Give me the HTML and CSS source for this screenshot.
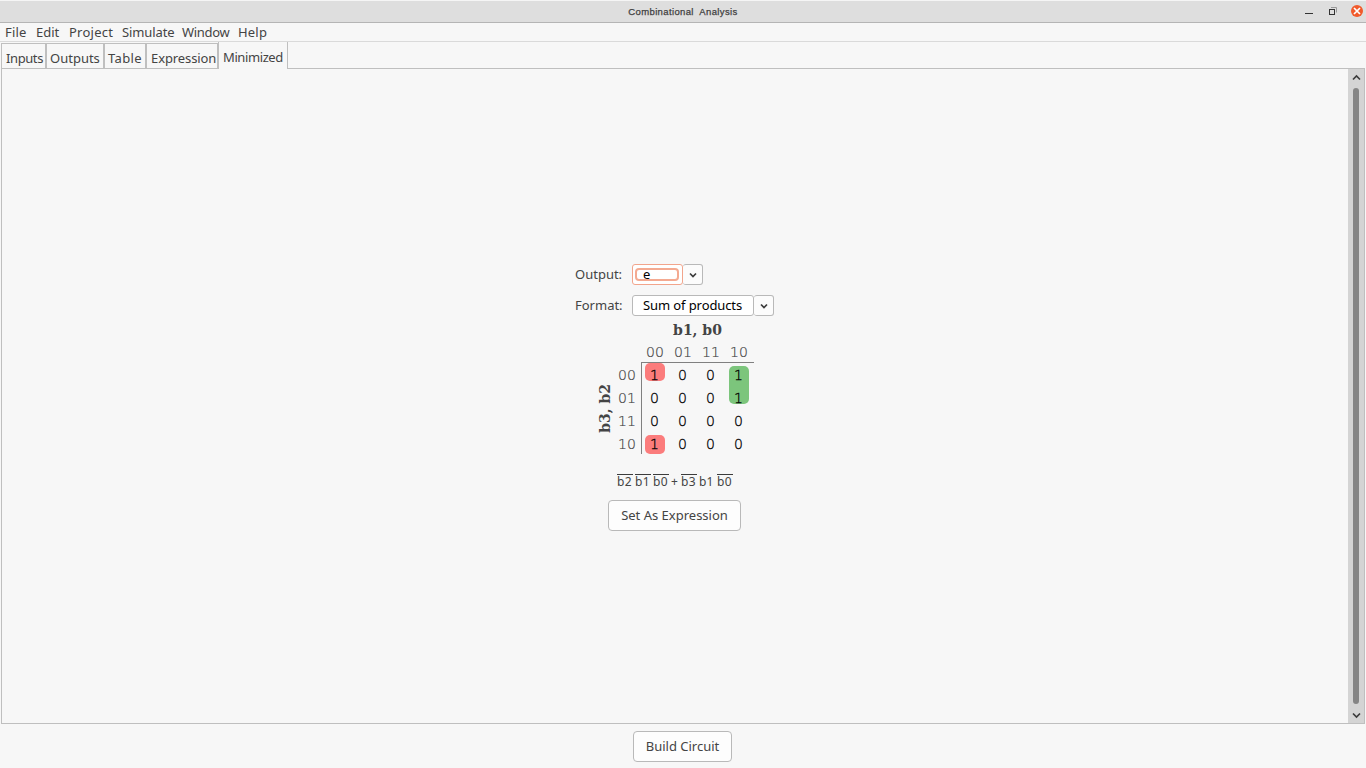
FILE: index.html
```html
<!DOCTYPE html>
<html lang="en">
<head>
<meta charset="utf-8">
<title>Combinational Analysis</title>
<link rel="stylesheet" href="styles.css">
</head>
<body>
<header class="titlebar">
  <h1 class="title">Combinational&nbsp; Analysis</h1>
  <div class="controls">
    <svg width="62" height="18" viewBox="0 0 62 18">
      <path d="M1 12.500h8" stroke="#333"/>
      <path d="M27 6.500h5.500v5" stroke="#999"/>
      <rect x="25.500" y="8.500" width="5" height="5" stroke="#333" fill="none"/>
      <circle cx="53" cy="10" r="6" fill="#f15a2b"/>
      <path d="M50 7l6 6M56 7l-6 6" stroke="#fff" stroke-width="1.700"/>
    </svg>
  </div>
</header>
<nav class="menubar">
  <span class="m-file">File</span><span class="m-edit">Edit</span><span class="m-project">Project</span><span class="m-simulate">Simulate</span><span class="m-window">Window</span><span class="m-help">Help</span>
</nav>
<div class="tabs">
  <div class="tab t-inputs"><span>Inputs</span></div>
  <div class="tab t-outputs"><span>Outputs</span></div>
  <div class="tab t-table"><span>Table</span></div>
  <div class="tab t-expression"><span>Expression</span></div>
  <div class="tab active"><span>Minimized</span></div>
  <div class="tab-fill"></div>
</div>
<main class="panel">
  <section class="content">
    <div class="field">
      <label>Output:</label>
      <div class="combo focused"><span class="value"><span class="inner">e</span></span><span class="arrow"><svg width="9" height="6" viewBox="0 0 9 6"><path d="M1 1.500l3 3 3-3" /></svg></span></div>
    </div>
    <div class="field">
      <label>Format:</label>
      <div class="combo wide"><span class="value">Sum of products</span><span class="arrow"><svg width="9" height="6" viewBox="0 0 9 6"><path d="M1 1.500l3 3 3-3" /></svg></span></div>
    </div>
    <div class="kmap">
      <div class="top-vars">b1, b0</div>
      <div class="cols"><span>00</span><span>01</span><span>11</span><span>10</span></div>
      <div class="side-vars"><span>b3, b2</span></div>
      <div class="rows"><span>00</span><span>01</span><span>11</span><span>10</span></div>
      <div class="cells">
        <i class="group red-top"></i><i class="group red-bottom"></i><i class="group green"></i>
        <span>1</span><span>0</span><span>0</span><span>1</span>
        <span>0</span><span>0</span><span>0</span><span>1</span>
        <span>0</span><span>0</span><span>0</span><span>0</span>
        <span>1</span><span>0</span><span>0</span><span>0</span>
      </div>
    </div>
    <div class="formula"><span class="not">b2</span><span class="not">b1</span><span class="not">b0</span><span class="plus">+</span><span class="not">b3</span><span class="var">b1</span><span class="not">b0</span></div>
    <button class="button set"><span>Set As Expression</span></button>
  </section>
  <aside class="scrollbar">
    <svg width="11" height="8" viewBox="0 0 11 8"><path d="M2 6.500l3.500-3.500L9 6.500"/></svg>
    <div class="thumb"></div>
    <svg width="11" height="8" viewBox="0 0 11 8"><path d="M2 2.500l3.500 3.500L9 2.500"/></svg>
  </aside>
</main>
<footer class="footer"><button class="button build"><span>Build Circuit</span></button></footer>
</body>
</html>
```
FILE: styles.css
```css
* { box-sizing: border-box; }
body {
  margin: 0;
  width: 1366px;
  height: 768px;
  overflow: hidden;
  display: flex;
  flex-direction: column;
  background: #f7f7f7;
  color: #444;
  font: 13px/18px "Noto Sans", sans-serif;
  white-space: nowrap;
}
.titlebar {
  height: 23px;
  display: grid;
  grid-template-columns: 62px 1fr 62px;
  background: #dedede;
  border-top: 1px solid #f5f5f5;
  border-bottom: 1px solid #b5b5b5;
}
.title {
  grid-column: 2;
  margin: 0;
  text-align: center;
  font: 9.5px/21px "Liberation Sans", sans-serif;
  letter-spacing: 0.37px;
  -webkit-text-stroke: 0.25px #3c3c3c;
}
.controls svg { display: block; }
.menubar {
  height: 19px;
  display: flex;
  padding-left: 5px;
  border-bottom: 1px solid #dadada;
  line-height: 19px;
}
.m-file { width: 31px; letter-spacing: 0.2px; }
.m-edit { width: 33px; }
.m-project { width: 53px; letter-spacing: 0.25px; }
.m-simulate { width: 60px; letter-spacing: -0.1px; }
.m-window { width: 56px; letter-spacing: -0.3px; }
.m-help { letter-spacing: 0.2px; }
.tabs {
  height: 27px;
  display: flex;
  padding-left: 1px;
}
.tab {
  margin-top: 1px;
  border: 1px solid #bfbfbf;
  padding: 5px 0 0 3px;
}
.t-inputs { width: 45px; padding-left: 4px; letter-spacing: -0.4px; }
.t-outputs { width: 58px; }
.t-table { width: 42px; letter-spacing: 0.35px; }
.t-expression { width: 72px; padding-left: 4px; letter-spacing: -0.1px; }
.active {
  width: 70px;
  margin-top: 0;
  padding-top: 6px;
  padding-left: 4px;
  border-top: 0;
  border-bottom: 0;
  letter-spacing: -0.4px;
}
.tab-fill { flex: 1; margin-right: 1px; border-bottom: 1px solid #bfbfbf; }
.panel {
  height: 655px;
  margin: 0 1px;
  display: flex;
  border: 1px solid #bfbfbf;
  border-top: 0;
}
.content {
  flex: 1;
  padding: 195px 0 0 573px;
  display: flex;
  flex-direction: column;
  align-items: flex-start;
}
.field { height: 31px; display: flex; }
.field label { width: 57px; line-height: 21px; }
.combo { height: 21px; display: flex; color: #000; line-height: 19px; }
.value {
  width: 51px;
  border: 1px solid #b9b9b9;
  border-radius: 3px;
  background: #fff;
}
.wide .value { width: 122px; padding-left: 10px; letter-spacing: -0.1px; }
.focused .value { padding: 3px 2px; border-color: #f2a58c; }
.inner {
  display: block;
  height: 13px;
  width: 44px;
  padding-left: 6px;
  border: 2px solid #f4aa91;
  border-radius: 4px;
  line-height: 9px;
}
.arrow {
  width: 20px;
  display: grid;
  place-items: center;
  padding-left: 1px;
  border: 1px solid #b9b9b9;
  border-left: 0;
  border-radius: 3px;
  background: #fcfcfc;
}
svg path { fill: none; }
.arrow path, .scrollbar path { stroke: #3c3c3c; stroke-width: 1.7; }
.kmap {
  margin: -6px 0 0 20px;
  display: grid;
  grid-template: 22px 20px 92px / 22px 24px 113px;
  font: 200 14px/23px "DejaVu Sans", sans-serif;
  -webkit-text-stroke: 0.2px;
}
.top-vars {
  grid-area: 1 / 3;
  text-align: center;
  font: bold 14px/20px "DejaVu Serif", serif;
  -webkit-text-stroke: 0;
}
.cols {
  grid-area: 2 / 3;
  display: grid;
  grid-template-columns: repeat(4, 28px);
  text-align: center;
  line-height: 21px;
}
.side-vars {
  grid-area: 3 / 1;
  display: grid;
  place-items: center;
  padding-right: 5px;
  font: bold 14px/20px "DejaVu Serif", serif;
  -webkit-text-stroke: 0;
}
.side-vars span { writing-mode: vertical-rl; transform: rotate(180deg); }
.rows { grid-area: 3 / 2; display: grid; padding-left: 1px; line-height: 27px; grid-auto-rows: 23px; }
.cells {
  grid-area: 3 / 3;
  position: relative;
  display: grid;
  grid-template: repeat(4, 23px) / repeat(4, 28px);
  border-left: 1px solid #808080;
  border-top: 1px solid #808080;
  color: #000;
  text-align: center;
  line-height: 25px;
  -webkit-text-stroke: 0.3px;
}
.cells span { position: relative; left: -1.5px; }
.group { position: absolute; border-radius: 5px; }
.red-top { left: 3px; top: 0; width: 20px; height: 18px; background: #fb7c7c; }
.red-bottom { left: 3px; top: 72px; width: 20px; height: 19px; background: #fb7c7c; }
.green { left: 87px; top: 3px; width: 20px; height: 38px; background: #7cc57c; }
.formula {
  height: 17px;
  margin: 18px 0 0 42px;
  display: grid;
  grid-template-columns: 16px 16px 16px 8px 16px 16px 16px;
  gap: 2px;
  font-size: 12px;
  line-height: 19px;
}
.not { border-top: 1px solid #3c3c3c; height: 15px; margin-top: 2px; line-height: 13px; letter-spacing: 0.4px; }
.button {
  height: 31px;
  padding: 0 0 1px;
  border: 1px solid #b9b9b9;
  border-radius: 4px;
  background: #fdfdfd;
  color: #444;
  font: 13px/20px "Noto Sans", sans-serif;
}
.set { width: 133px; margin: 11px 0 0 33px; }
.scrollbar {
  width: 16px;
  background: #d4d4d4;
  display: flex;
  flex-direction: column;
  align-items: center;
  padding: 4px 0;
}
.thumb { width: 6px; height: 616px; margin: 7px 0 auto; border-radius: 3px; background: #858585; }
.footer { flex: 1; padding: 7px 0 0 633px; }
.build { width: 99px; display: block; }
```
